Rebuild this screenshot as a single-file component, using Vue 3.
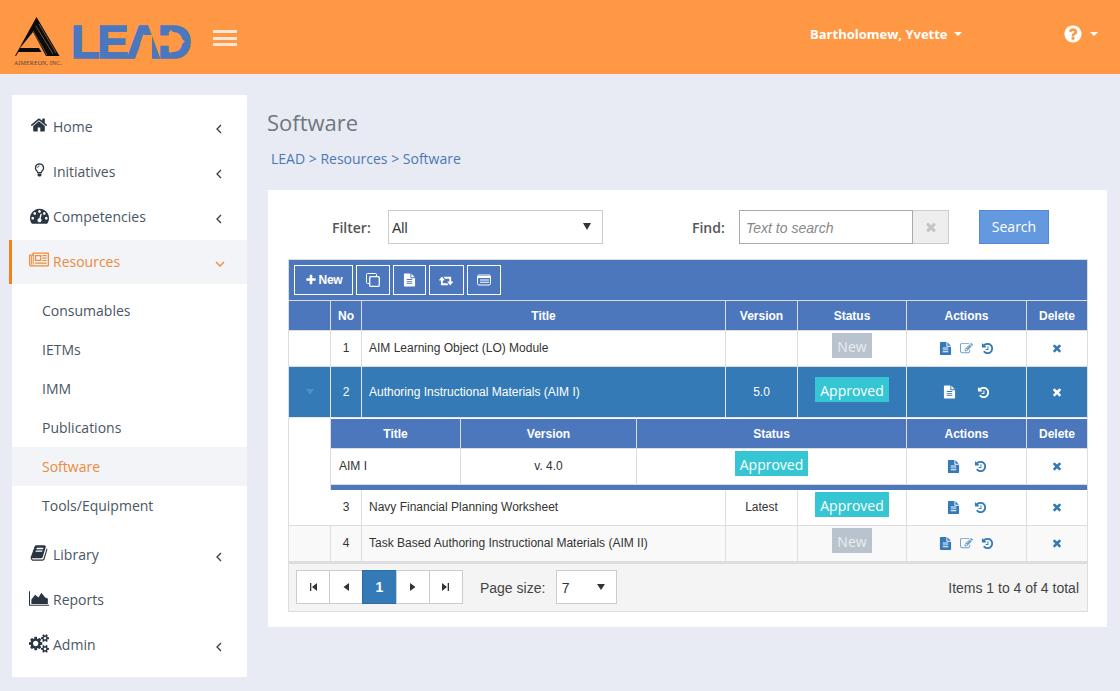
<script setup>
const icons = {
  home: { box: 1792, d: 'M1472 992v480q0 26-19 45t-45 19h-384v-384h-256v384h-384q-26 0-45-19t-19-45v-480q0-1 .5-3t.5-3l575-474 575 474q1 2 1 6zm223-69l-62 74q-8 9-21 11h-3q-13 0-21-7l-692-577-692 577q-12 8-24 7-13-2-21-11l-62-74q-8-10-7-23.500t11-21.500l719-599q32-26 76-26t76 26l244 204v-195q0-14 9-23t23-9h192q14 0 23 9t9 23v408l219 182q10 8 11 21.500t-7 23.500z' },
  gauge: { box: 1792, d: 'M384 1152q0-53-37.500-90.500t-90.500-37.500-90.500 37.500-37.500 90.500 37.500 90.500 90.500 37.500 90.500-37.500 37.500-90.500zm192-448q0-53-37.500-90.500t-90.500-37.500-90.500 37.500-37.500 90.500 37.500 90.500 90.500 37.500 90.500-37.500 37.500-90.500zm428 481l101-382q6-26-7.500-48.500t-38.500-29.500-48 6.500-30 39.500l-101 382q-60 5-107 43.500t-63 98.500q-20 77 20 146t117 89 146-20 89-117q16-60-6-117t-72-91zm660-33q0-53-37.500-90.500t-90.500-37.500-90.500 37.500-37.500 90.500 37.500 90.500 90.500 37.500 90.500-37.500 37.500-90.500zm-640-640q0-53-37.500-90.500t-90.500-37.500-90.500 37.500-37.500 90.500 37.500 90.500 90.500 37.500 90.500-37.500 37.500-90.500zm448 192q0-53-37.500-90.500t-90.500-37.500-90.500 37.500-37.500 90.500 37.500 90.500 90.500 37.500 90.500-37.500 37.500-90.500zm320 448q0 261-141 483-19 29-54 29h-1402q-35 0-54-29-141-221-141-483 0-182 71-348t191-286 286-191 348-71 348 71 286 191 191 286 71 348z' },
  book: { box: 1792, d: 'M1703 478q40 57 18 129l-275 906q-19 64-76.500 107.500t-122.500 43.500h-923q-77 0-148.500-53.500t-99.500-131.500q-24-67-2-127 0-4 3-27t4-37q1-8-3-21.500t-3-19.500q2-11 8-21t16.500-23.500 16.500-23.500q23-38 45-91.500t30-91.500q3-10 .5-30t-.5-28q3-11 17-28t17-23q21-36 42-92t25-90q1-9-2.500-32t.5-28q4-13 22-30.500t22-22.500q19-26 42.500-84.500t27.500-96.500q1-8-3-25.500t-2-26.500q2-8 9-18t18-23 17-21q8-12 16.500-30.500t15-35 16-36 19.500-32 26.500-23.500 36-11.500 47.500 5.500l-1 3q38-9 51-9h761q74 0 114 56t18 130l-274 906q-36 119-71.500 153.500t-128.500 34.500h-869q-27 0-38 15-11 16-1 43 24 70 144 70h923q29 0 56-15.500t35-41.500l300-987q7-22 5-57 38 15 59 43zm-1064 2q-4 13 2 22.500t20 9.500h608q13 0 25.500-9.500t16.500-22.500l21-64q4-13-2-22.500t-20-9.500h-608q-13 0-25.500 9.500t-16.500 22.500zm-83 256q-4 13 2 22.500t20 9.500h608q13 0 25.500-9.500t16.500-22.500l21-64q4-13-2-22.500t-20-9.500h-608q-13 0-25.500 9.500t-16.500 22.500z' },
  cogs: { box: 1920, d: 'M896 896q0-106-75-181t-181-75-181 75-75 181 75 181 181 75 181-75 75-181zm768 512q0-52-38-90t-90-38-90 38-38 90q0 53 37.500 90.500t90.500 37.500 90.500-37.500 37.500-90.500zm0-1024q0-52-38-90t-90-38-90 38-38 90q0 53 37.500 90.500t90.500 37.500 90.500-37.500 37.500-90.500zm-384 421v185q0 10-7 19.500t-16 10.500l-155 24q-11 35-32 76 34 48 90 115 7 11 7 20 0 12-7 19-23 30-82.500 89.500t-78.500 59.500q-11 0-21-7l-115-90q-37 19-77 31-11 108-23 155-7 24-30 24h-186q-11 0-20-7.500t-10-17.500l-23-153q-34-10-75-31l-118 89q-7 7-20 7-11 0-21-8-144-133-144-160 0-9 7-19 10-14 41-53t47-61q-23-44-35-82l-152-24q-10-1-17-9.500t-7-19.500v-185q0-10 7-19.500t16-10.500l155-24q11-35 32-76-34-48-90-115-7-11-7-20 0-12 7-20 22-30 82-89t79-59q11 0 21 7l115 90q34-18 77-32 11-108 23-154 7-24 30-24h186q11 0 20 7.500t10 17.500l23 153q34 10 75 31l118-89q8-7 20-7 11 0 21 8 144 133 144 160 0 8-7 19-12 16-42 54t-45 60q23 48 34 82l152 23q10 2 17 10.500t7 19.500zm640 533v140q0 16-149 31-12 27-30 52 51 113 51 138 0 4-4 7-122 71-124 71-8 0-46-47t-52-68q-20 2-30 2t-30-2q-14 21-52 68t-46 47q-2 0-124-71-4-3-4-7 0-25 51-138-18-25-30-52-149-15-149-31v-140q0-16 149-31 13-29 30-52-51-113-51-138 0-4 4-7 4-2 35-20t59-34 30-16q8 0 46 46.500t52 67.500q20-2 30-2t30 2q51-71 92-112l6-2q4 0 124 70 4 3 4 7 0 25-51 138 17 23 30 52 149 15 149 31zm0-1024v140q0 16-149 31-12 27-30 52 51 113 51 138 0 4-4 7-122 71-124 71-8 0-46-47t-52-68q-20 2-30 2t-30-2q-14 21-52 68t-46 47q-2 0-124-71-4-3-4-7 0-25 51-138-18-25-30-52-149-15-149-31v-140q0-16 149-31 13-29 30-52-51-113-51-138 0-4 4-7 4-2 35-20t59-34 30-16q8 0 46 46.500t52 67.500q20-2 30-2t30 2q51-71 92-112l6-2q4 0 124 70 4 3 4 7 0 25-51 138 17 23 30 52 149 15 149 31z' },
  file: { box: 1792, d: 'M1596 476q14 14 28 36h-472v-472q22 14 36 28zm-476 164h544v1056q0 40-28 68t-68 28h-1344q-40 0-68-28t-28-68v-1600q0-40 28-68t68-28h800v544q0 40 28 68t68 28zm160 736v-64q0-14-9-23t-23-9h-704q-14 0-23 9t-9 23v64q0 14 9 23t23 9h704q14 0 23-9t9-23zm0-256v-64q0-14-9-23t-23-9h-704q-14 0-23 9t-9 23v64q0 14 9 23t23 9h704q14 0 23-9t9-23zm0-256v-64q0-14-9-23t-23-9h-704q-14 0-23 9t-9 23v64q0 14 9 23t23 9h704q14 0 23-9t9-23z' },
  history: { box: 1792, d: 'M1664 896q0 156-61 298t-164 245-245 164-298 61q-172 0-327-72.500t-264-204.500q-7-10-6.500-22.500t8.500-20.500l137-138q10-9 25-9 16 2 23 12 73 95 179 147t225 52q104 0 198.500-40.500t163.500-109.500 109.500-163.500 40.500-198.500-40.500-198.500-109.500-163.500-163.500-109.500-198.500-40.500q-98 0-188 35.500t-160 101.500l137 138q31 30 14 69-17 40-59 40h-448q-26 0-45-19t-19-45v-448q0-42 40-59 39-17 69 14l130 129q107-101 244.500-156.500t284.500-55.500q156 0 298 61t245 164 164 245 61 298zm-640-288v448q0 14-9 23t-23 9h-320q-14 0-23-9t-9-23v-64q0-14 9-23t23-9h224v-352q0-14 9-23t23-9h64q14 0 23 9t9 23z' },
  edit: { box: 1792, d: 'M888 1184l116-116-152-152-116 116v56h96v96h56zm440-720q-16-16-33 1l-350 350q-17 17-1 33t33-1l350-350q17-17 1-33zm80 594v190q0 119-84.500 203.500t-203.500 84.500h-832q-119 0-203.500-84.500t-84.500-203.500v-832q0-119 84.500-203.500t203.500-84.500h832q63 0 117 25 15 7 18 23 3 17-9 29l-49 49q-14 14-32 8-23-6-45-6h-832q-66 0-113 47t-47 113v832q0 66 47 113t113 47h832q66 0 113-47t47-113v-126q0-13 9-22l64-64q15-15 35-7t20 29zm-96-738l288 288-672 672h-288v-288zm444 132l-92 92-288-288 92-92q28-28 68-28t68 28l152 152q28 28 28 68t-28 68z' },
  times: { box: 1792, d: 'M1490 1322q0 40-28 68l-136 136q-28 28-68 28t-68-28l-294-294-294 294q-28 28-68 28t-68-28l-136-136q-28-28-28-68t28-68l294-294-294-294q-28-28-28-68t28-68l136-136q28-28 68-28t68 28l294 294 294-294q28-28 68-28t68 28l136 136q28 28 28 68t-28 68l-294 294 294 294q28 28 28 68z' },
  plus: { box: 1792, d: 'M1600 736v192q0 40-28 68t-68 28h-416v416q0 40-28 68t-68 28h-192q-40 0-68-28t-28-68v-416h-416q-40 0-68-28t-28-68v-192q0-40 28-68t68-28h416v-416q0-40 28-68t68-28h192q40 0 68 28t28 68v416h416q40 0 68 28t28 68z' },
  retweet: { box: 1920, d: 'M1216 1504q0 13-9.500 22.500t-22.500 9.500h-960q-8 0-13.500-2t-9-7-5.500-8-3-11.500-1-11.500v-600h-192q-26 0-45-19t-19-45q0-24 15-41l320-384q19-22 49-22t49 22l320 384q15 17 15 41 0 26-19 45t-45 19h-192v384h576q16 0 25 11l160 192q7 10 7 21zm640-416q0 24-15 41l-320 384q-20 23-49 23t-49-23l-320-384q-15-17-15-41 0-26 19-45t45-19h192v-384h-576q-16 0-25-12l-160-192q-7-9-7-20 0-13 9.500-22.500t22.500-9.500h960q8 0 13.500 2t9 7 5.500 8 3 11.500 1 11.500v600h192q26 0 45 19t19 45z' },
  help: { box: 1792, d: 'M1024 1376v-192q0-14-9-23t-23-9h-192q-14 0-23 9t-9 23v192q0 14 9 23t23 9h192q14 0 23-9t9-23zm256-672q0-88-55.500-163t-138.500-116-170-41q-243 0-371 213-15 24 8 42l132 100q7 6 19 6 16 0 25-12 53-68 86-92 34-24 86-24 48 0 85.500 26t37.500 59q0 38-20 61t-68 45q-63 28-115.500 86.500t-52.500 125.500v36q0 14 9 23t23 9h192q14 0 23-9t9-23q0-19 21.500-49.500t54.500-49.500q32-18 49-28.500t46-35 44.500-48 28-60.500 12.500-81zm384 192q0 209-103 385.500t-279.500 279.500-385.500 103-385.500-103-279.500-279.500-103-385.500 103-385.500 279.500-279.500 385.500-103 385.500 103 279.500 279.500 103 385.500z' },
}

const menuTop = [
  { label: 'Home', icon: 'home', chevron: true },
  { label: 'Initiatives', icon: 'bulb', chevron: true },
  { label: 'Competencies', icon: 'gauge', chevron: true },
]
const menuBottom = [
  { label: 'Library', icon: 'book', chevron: true },
  { label: 'Reports', icon: 'area', chevron: false },
  { label: 'Admin', icon: 'cogs', chevron: true },
]
const subItems = ['Consumables', 'IETMs', 'IMM', 'Publications', 'Software', 'Tools/Equipment']
const pages = ['first', 'prev', '1', 'next', 'last']
</script>

<template>
  <div class="page">
    <header class="topbar">
      <div class="aim-logo">
        <svg width="46" height="40" viewBox="0 0 46 40">
          <path d="M21.500 0 L44.500 39 L31 39 L18 15 L5 31 L24 31 L26.500 35 L3.500 35 L1 39 L0 39 Z" fill="#0c0c0c" />
          <path d="M21 9 L38 37 M24 7 L41 36 M18 14 L32 38" stroke="#8a6238" stroke-width="0.8" />
        </svg>
        <span class="aim-name">AIMEREON, INC.</span>
      </div>
      <div class="lead-logo">
        <span>LEAD</span>
        <i class="lead-gap"></i>
        <i class="lead-arrow"></i>
      </div>
      <div class="burger"><i></i><i></i><i></i></div>
      <div class="user">Bartholomew, Yvette<i class="caret"></i></div>
      <svg class="help" viewBox="0 0 1792 1792"><path :d="icons.help.d" fill="#fff" /></svg>
      <i class="caret help-caret"></i>
    </header>

    <div class="content">
      <aside class="sidebar">
        <a v-for="item in menuTop" :key="item.label" class="menu-item upper">
          <span class="menu-icon">
            <svg v-if="item.icon === 'bulb'" width="11" height="16" viewBox="0 0 13 17">
              <path d="M6.500 1.200a4.800 4.800 0 0 0-3 8.500c.6.600.9 1.300 1 2h4c.1-.7.400-1.400 1-2a4.800 4.800 0 0 0-3-8.500z" fill="none" stroke="#2a3542" stroke-width="1.500" />
              <path d="M4.300 12.500h4.400v2.300l-1 1.500h-2.400l-1-1.500z" fill="#2a3542" />
              <path d="M4.200 6a2.300 2.300 0 0 1 2.300-2.300" fill="none" stroke="#2a3542" />
            </svg>
            <svg v-else :width="item.icon === 'gauge' ? 19 : 18" :height="item.icon === 'gauge' ? 19 : 18" :viewBox="`0 0 ${icons[item.icon].box} ${icons[item.icon].box}`">
              <path :d="icons[item.icon].d" fill="#2a3542" />
            </svg>
          </span>
          <span>{{ item.label }}</span>
          <svg class="chevron" width="6" height="10" viewBox="0 0 6 10"><path d="M5 1 L1 5 L5 9" fill="none" stroke="#2f3d4d" stroke-width="1.300" /></svg>
        </a>

        <a class="menu-item upper is-active">
          <span class="menu-icon">
            <svg width="21" height="15" viewBox="0 0 21 15">
              <path d="M4.500 .7h15.800v12.800a.8.8 0 0 1-.8.8H2.200a1.500 1.500 0 0 1-1.500-1.500V3h3.800z" fill="none" stroke="#ee8a38" stroke-width="1.300" />
              <path d="M2.700 4v9M4.500 1v12" stroke="#ee8a38" />
              <path d="M6.800 3.500h5.500v5h-5.500z" fill="none" stroke="#ee8a38" stroke-width="1.300" />
              <path d="M14 3.500h4.500M14 6h4.500M14 8.500h4.500M6.500 11.300h12" stroke="#ee8a38" stroke-width="1.200" />
            </svg>
          </span>
          <span>Resources</span>
          <svg class="chevron chevron-down" width="10" height="6" viewBox="0 0 10 6"><path d="M1 1 L5 5 L9 1" fill="none" stroke="#ee8a38" stroke-width="1.300" /></svg>
        </a>

        <ul class="submenu">
          <li v-for="sub in subItems" :key="sub" :class="{ 'is-current': sub === 'Software' }">{{ sub }}</li>
        </ul>

        <a v-for="item in menuBottom" :key="item.label" class="menu-item">
          <span class="menu-icon">
            <svg v-if="item.icon === 'area'" width="21" height="15" viewBox="0 0 21 15">
              <path d="M.5 0v14.500H21" fill="none" stroke="#2a3542" stroke-width="1.100" />
              <path d="M2.500 13.200V8.500L6.500 3.500 10 6.500 13 1.500 17 6.500 19.800 7.500V13.200z" fill="#2a3542" />
            </svg>
            <svg v-else :width="item.icon === 'cogs' ? 20 : 18" :height="item.icon === 'cogs' ? 19 : 18" :viewBox="`0 0 ${icons[item.icon].box} 1792`">
              <path :d="icons[item.icon].d" fill="#2a3542" />
            </svg>
          </span>
          <span>{{ item.label }}</span>
          <svg v-if="item.chevron" class="chevron" width="6" height="10" viewBox="0 0 6 10"><path d="M5 1 L1 5 L5 9" fill="none" stroke="#2f3d4d" stroke-width="1.300" /></svg>
        </a>
      </aside>

      <main class="main">
        <h1 class="page-title">Software</h1>
        <div class="crumbs">LEAD &gt; Resources &gt; Software</div>

        <section class="card">
          <div class="filters">
            <label class="filter-label">Filter:</label>
            <div class="select filter-select">All<i class="tri"></i></div>
            <label class="find-label">Find:</label>
            <div class="find-input">Text to search</div>
            <div class="find-clear">
              <svg width="14" height="14" viewBox="0 0 1792 1792"><path :d="icons.times.d" fill="#c4c4c4" /></svg>
            </div>
            <button class="search-btn" type="button">Search</button>
          </div>

          <div class="grid">
            <div class="toolbar">
              <button class="tool-btn tool-new" type="button">
                <svg width="12" height="12" viewBox="0 0 1792 1792"><path :d="icons.plus.d" fill="#fff" /></svg>
                <span>New</span>
              </button>
              <button class="tool-btn w34" type="button">
                <svg width="14" height="14" viewBox="0 0 14 14" fill="none" stroke="#fff">
                  <path d="M3.500 10.500H1.500a1 1 0 0 1-1-1v-8a1 1 0 0 1 1-1h8a1 1 0 0 1 1 1v2" stroke-width="1" />
                  <rect x="3.700" y="3.700" width="9.600" height="9.600" rx="1" stroke-width="1.300" />
                </svg>
              </button>
              <button class="tool-btn w33" type="button">
                <svg width="13" height="14" viewBox="0 0 1792 1792"><path :d="icons.file.d" fill="#fff" /></svg>
              </button>
              <button class="tool-btn w35" type="button">
                <svg width="15" height="13" viewBox="0 0 1920 1792"><path :d="icons.retweet.d" fill="#fff" /></svg>
              </button>
              <button class="tool-btn w34" type="button">
                <svg width="14" height="12" viewBox="0 0 14 12">
                  <rect x=".5" y="1" width="13" height="10" rx="1.500" fill="none" stroke="#fff" />
                  <path d="M1 2h12v2H1zM3 5.500h9v1H3zM3 7.800h9v1H3z" fill="#fff" />
                </svg>
              </button>
            </div>

            <table class="data">
              <colgroup>
                <col style="width: 42px" /><col style="width: 31px" /><col style="width: 364px" />
                <col style="width: 72px" /><col style="width: 109px" /><col style="width: 120px" /><col style="width: 60px" />
              </colgroup>
              <thead>
                <tr><th></th><th>No</th><th>Title</th><th>Version</th><th>Status</th><th>Actions</th><th class="last">Delete</th></tr>
              </thead>
              <tbody>
                <tr class="row">
                  <td></td><td class="c">1</td><td class="title">AIM Learning Object (LO) Module</td><td class="c"></td>
                  <td class="c"><span class="badge new">New</span></td>
                  <td class="c">
                    <div class="actions gap10">
                      <svg width="13" height="13" viewBox="0 0 1792 1792"><path :d="icons.file.d" /></svg>
                      <svg class="pale" width="13" height="13" viewBox="0 0 1792 1792"><path :d="icons.edit.d" /></svg>
                      <svg width="13" height="13" viewBox="0 0 1792 1792"><path :d="icons.history.d" /></svg>
                    </div>
                  </td>
                  <td class="c last"><svg class="del" width="12" height="12" viewBox="0 0 1792 1792"><path :d="icons.times.d" /></svg></td>
                </tr>

                <tr class="row selected">
                  <td class="c"><i class="expand"></i></td><td class="c">2</td><td class="title">Authoring Instructional Materials (AIM I)</td><td class="c">5.0</td>
                  <td class="c"><span class="badge ok">Approved</span></td>
                  <td class="c">
                    <div class="actions gap22">
                      <svg width="13" height="14" viewBox="0 0 1792 1792"><path :d="icons.file.d" /></svg>
                      <svg width="13" height="13" viewBox="0 0 1792 1792"><path :d="icons.history.d" /></svg>
                    </div>
                  </td>
                  <td class="c last"><svg class="del" width="12" height="12" viewBox="0 0 1792 1792"><path :d="icons.times.d" /></svg></td>
                </tr>

                <tr>
                  <td rowspan="2" class="spacer"></td>
                  <td colspan="6" class="detail">
                    <table class="data nested">
                      <colgroup>
                        <col style="width: 130px" /><col style="width: 176px" /><col style="width: 270px" /><col style="width: 120px" /><col style="width: 60px" />
                      </colgroup>
                      <thead>
                        <tr><th>Title</th><th>Version</th><th>Status</th><th>Actions</th><th class="last">Delete</th></tr>
                      </thead>
                      <tbody>
                        <tr class="row">
                          <td class="title">AIM I</td><td class="c">v. 4.0</td>
                          <td class="c"><span class="badge ok">Approved</span></td>
                          <td class="c">
                            <div class="actions gap16">
                              <svg width="13" height="13" viewBox="0 0 1792 1792"><path :d="icons.file.d" /></svg>
                              <svg width="13" height="13" viewBox="0 0 1792 1792"><path :d="icons.history.d" /></svg>
                            </div>
                          </td>
                          <td class="c last"><svg class="del" width="12" height="12" viewBox="0 0 1792 1792"><path :d="icons.times.d" /></svg></td>
                        </tr>
                      </tbody>
                    </table>
                  </td>
                </tr>

                <tr class="row">
                  <td class="c">3</td><td class="title">Navy Financial Planning Worksheet</td><td class="c">Latest</td>
                  <td class="c"><span class="badge ok">Approved</span></td>
                  <td class="c">
                    <div class="actions gap16">
                      <svg width="13" height="13" viewBox="0 0 1792 1792"><path :d="icons.file.d" /></svg>
                      <svg width="13" height="13" viewBox="0 0 1792 1792"><path :d="icons.history.d" /></svg>
                    </div>
                  </td>
                  <td class="c last"><svg class="del" width="12" height="12" viewBox="0 0 1792 1792"><path :d="icons.times.d" /></svg></td>
                </tr>

                <tr class="row alt">
                  <td></td><td class="c">4</td><td class="title">Task Based Authoring Instructional Materials (AIM II)</td><td class="c"></td>
                  <td class="c"><span class="badge new">New</span></td>
                  <td class="c">
                    <div class="actions gap10">
                      <svg width="13" height="13" viewBox="0 0 1792 1792"><path :d="icons.file.d" /></svg>
                      <svg class="pale" width="13" height="13" viewBox="0 0 1792 1792"><path :d="icons.edit.d" /></svg>
                      <svg width="13" height="13" viewBox="0 0 1792 1792"><path :d="icons.history.d" /></svg>
                    </div>
                  </td>
                  <td class="c last"><svg class="del" width="12" height="12" viewBox="0 0 1792 1792"><path :d="icons.times.d" /></svg></td>
                </tr>
              </tbody>
            </table>

            <div class="pager">
              <div class="pages">
                <button v-for="p in pages" :key="p" class="page-btn" :class="{ 'is-on': p === '1' }" type="button">
                  <template v-if="p === '1'">1</template>
                  <svg v-else width="9" height="8" viewBox="0 0 9 8">
                    <path v-if="p === 'first'" d="M1 0h1.300v8H1zM8 0v8L3 4z" fill="#333" />
                    <path v-else-if="p === 'prev'" d="M7 0v8L1.500 4z" fill="#333" />
                    <path v-else-if="p === 'next'" d="M2 0v8L7.500 4z" fill="#333" />
                    <path v-else d="M1 0v8l5-4zM6.700 0H8v8H6.700z" fill="#333" />
                  </svg>
                </button>
              </div>
              <span class="size-label">Page size:</span>
              <div class="select size-select">7<i class="tri"></i></div>
              <span class="items">Items 1 to 4 of 4 total</span>
            </div>
          </div>
        </section>
      </main>
    </div>
  </div>
</template>

<style>
html,
body {
  margin: 0;
  background: #e8ebf3;
}
</style>

<style scoped>
.page {
  width: 1120px;
  height: 691px;
  overflow: hidden;
  background: #e8ebf3;
  font-family: 'Open Sans', sans-serif;
  font-size: 14px;
  color: #333;
}

.topbar {
  height: 74px;
  background: #ff9845;
  display: flex;
  align-items: center;
  color: #fff;
}

.aim-logo {
  width: 58px;
  margin-left: 14px;
  display: flex;
  flex-direction: column;
  align-items: center;
  align-self: flex-start;
  padding-top: 17px;
}

.aim-logo svg {
  margin-right: 10px;
}

.aim-name {
  margin-top: 2px;
  margin-right: 10px;
  font-family: 'Liberation Serif', serif;
  font-size: 6px;
  line-height: 8px;
  letter-spacing: 0.1px;
  white-space: nowrap;
  color: #5a4030;
}

.lead-logo {
  position: relative;
  width: 118px;
  height: 36px;
  margin-left: -1px;
  margin-top: 9px;
  line-height: 36px;
  font-family: 'Liberation Sans', sans-serif;
  font-size: 47px;
  font-weight: 700;
  letter-spacing: -2.400px;
  -webkit-text-stroke: 1.500px #4b77be;
  color: #4b77be;
  white-space: nowrap;
}

.lead-gap {
  position: absolute;
  left: 64px;
  top: 11px;
  width: 17px;
  height: 26px;
  background: #ff9845;
  clip-path: polygon(50% 0, 100% 0, 100% 100%, 0 100%);
}

.lead-arrow {
  position: absolute;
  left: 89px;
  top: 6px;
  width: 25px;
  height: 24px;
  background: #ff9845;
  clip-path: polygon(0 25%, 40% 25%, 40% 0, 100% 50%, 40% 100%, 40% 68%, 0 68%);
}

.burger {
  margin-left: 24px;
  margin-top: 2px;
  width: 24px;
  display: flex;
  flex-direction: column;
  gap: 3.500px;
}

.burger i {
  height: 3px;
  background: #ffe6d2;
}

.user {
  margin-left: 573px;
  margin-bottom: 6px;
  font-size: 13px;
  font-weight: 700;
  white-space: nowrap;
  display: flex;
  align-items: center;
}

.caret {
  display: inline-block;
  width: 0;
  height: 0;
  margin-left: 6px;
  border-top: 4px solid #fff;
  border-left: 4px solid transparent;
  border-right: 4px solid transparent;
}

.help {
  width: 20px;
  height: 20px;
  margin-left: 101px;
  margin-bottom: 6px;
}

.help-caret {
  margin-left: 7px;
  margin-bottom: 6px;
}

.content {
  display: flex;
  align-items: flex-start;
}

.sidebar {
  width: 235px;
  margin: 21px 0 0 12px;
  padding: 10px 0;
  background: #fff;
}

.menu-item {
  box-sizing: border-box;
  height: 45px;
  display: flex;
  align-items: center;
  padding: 0 25px 0 17px;
  color: #4a5664;
  font-size: 14px;
}

.upper {
  padding-bottom: 2px;
}

.menu-icon {
  width: 20px;
  margin-right: 4px;
  flex: 0 0 auto;
  display: flex;
  justify-content: center;
  margin-bottom: 3px;
}

.chevron {
  margin-left: auto;
  margin-top: 5px;
}

.chevron-down {
  margin-right: -3px;
}

.is-active {
  height: 44px;
  margin-bottom: 1px;
  margin-left: -3px;
  border-left: 3px solid #ee8417;
  background: #f2f4f8;
  color: #ee8a38;
}

.submenu {
  list-style: none;
  margin: 0;
  padding: 6px 0 7px;
}

.submenu li {
  height: 39px;
  line-height: 39px;
  padding-left: 30px;
  color: #4a5664;
}

.submenu li.is-current {
  background: #f2f4f8;
  color: #ee8a38;
}

.main {
  margin-left: 21px;
  width: 839px;
}

.page-title {
  margin: 33px 0 0 -1px;
  font-size: 22px;
  line-height: 30px;
  font-weight: 400;
  color: #6f777d;
}

.crumbs {
  margin: 12px 0 0 3px;
  line-height: 20px;
  color: #4a78b5;
}

.card {
  margin-top: 21px;
  padding: 20px 20px 15px;
  background: #fff;
}

.filters {
  height: 34px;
  display: flex;
  align-items: center;
  margin-bottom: 15px;
}

.filter-label,
.find-label {
  font-weight: 600;
  color: #555;
}

.filter-label {
  margin-left: 44px;
  width: 56px;
}

.select {
  position: relative;
  box-sizing: border-box;
  height: 34px;
  line-height: 34px;
  background: #fff;
  border: 1px solid #ccc;
  font-family: 'Liberation Sans', sans-serif;
  color: #333;
}

.tri {
  position: absolute;
  top: 12px;
  width: 0;
  height: 0;
  border-top: 7px solid #333;
  border-left: 4px solid transparent;
  border-right: 4px solid transparent;
}

.filter-select {
  width: 215px;
  padding-left: 3px;
}

.filter-select .tri {
  right: 11px;
}

.find-label {
  margin-left: 89px;
  width: 47px;
}

.find-input {
  box-sizing: border-box;
  width: 174px;
  height: 34px;
  line-height: 34px;
  padding-left: 6px;
  border: 1px solid #aaa;
  font-family: 'Liberation Sans', sans-serif;
  font-style: italic;
  color: #888;
}

.find-clear {
  box-sizing: border-box;
  width: 36px;
  height: 34px;
  display: flex;
  align-items: center;
  justify-content: center;
  background: #eee;
  border: 1px solid #ccc;
  border-left: 0;
}

.search-btn {
  width: 70px;
  height: 34px;
  margin-left: 30px;
  padding: 0 0 2px;
  background: #6499e0;
  border: 1px solid #4d8ad9;
  color: #fff;
  font-family: 'Open Sans', sans-serif;
  font-size: 14px;
}

.grid {
  width: 800px;
  box-sizing: border-box;
  border: 1px solid #ddd;
}

.toolbar {
  height: 40px;
  box-sizing: border-box;
  padding: 5px 0 0 5px;
  display: flex;
  gap: 3px;
  background: #4c77bd;
}

.tool-btn {
  height: 30px;
  box-sizing: border-box;
  padding: 0;
  display: flex;
  align-items: center;
  justify-content: center;
  background: transparent;
  border: 1px solid #fff;
  color: #fff;
  font-family: 'Liberation Sans', sans-serif;
  font-size: 12px;
  font-weight: 700;
}

.tool-new {
  width: 59px;
  gap: 2px;
  letter-spacing: -0.300px;
}

.w33 {
  width: 33px;
}

.w34 {
  width: 34px;
}

.w35 {
  width: 35px;
}

.data {
  width: 798px;
  table-layout: fixed;
  border-collapse: separate;
  border-spacing: 0;
  font-family: 'Liberation Sans', sans-serif;
  font-size: 12px;
  color: #333;
}

.data th {
  height: 29px;
  padding: 0;
  background: #4c77bd;
  color: #fff;
  font-weight: 700;
  border-top: 1px solid #ddd;
  border-right: 1px solid #ddd;
  border-bottom: 1px solid #ddd;
  box-sizing: content-box;
}

.data td {
  padding: 0;
  border-bottom: 1px solid #ddd;
  border-right: 1px solid #ddd;
}

.data .last {
  border-right: 0;
}

.data .row td {
  box-sizing: border-box;
  height: 36px;
  padding-bottom: 2px;
}

.alt td {
  background: #f9f9f9;
}

.data .selected td {
  height: 51px;
  padding-bottom: 1px;
  background: #337ab7;
  color: #fff;
  border-color: #e6e6e6;
}

.c {
  text-align: center;
}

.data .row .title {
  padding-left: 7px;
}

.data .nested .row .title {
  padding-left: 8px;
}

.data .spacer {
  border-right: 0;
  border-bottom: 1px solid #ddd;
}

.data .detail {
  border-right: 0;
  border-bottom: 0;
  box-shadow: -1px 0 0 #ddd;
}

.nested {
  width: 756px;
  border-bottom: 5px solid #4c77bd;
}

.nested th {
  border-top: 1px solid #fff;
}

.badge {
  display: inline-block;
  vertical-align: middle;
  height: 25px;
  line-height: 27px;
  padding: 0 5px;
  margin-bottom: 4px;
  font-family: 'Open Sans', sans-serif;
  font-size: 14px;
  color: #fff;
}

.badge.ok {
  background: #36c6d3;
}

.badge.new {
  background: #b9c3ce;
  color: #e9edf1;
}

.actions {
  display: flex;
  justify-content: center;
  align-items: center;
  margin-top: 1px;
  fill: #337ab7;
}

.actions svg {
  flex: 0 0 auto;
}

.pale {
  fill: #6c9ccb;
}

.gap10 {
  gap: 8px;
}

.gap16 {
  gap: 14px;
}

.gap22 {
  gap: 21px;
}

.selected .actions {
  fill: #fff;
}

.del {
  fill: #337ab7;
  vertical-align: middle;
}

.selected .del {
  fill: #fff;
}

.expand {
  display: inline-block;
  width: 0;
  height: 0;
  vertical-align: middle;
  border-top: 6px solid #4a8fcb;
  border-left: 4px solid transparent;
  border-right: 4px solid transparent;
}

.pager {
  height: 47px;
  box-sizing: content-box;
  border-top: 2px solid #ddd;
  padding: 0 8px 0 7px;
  display: flex;
  align-items: center;
  background: #f4f4f4;
  font-family: 'Liberation Sans', sans-serif;
  font-size: 14px;
  color: #444;
}

.pages {
  display: flex;
  margin-bottom: 1px;
}

.page-btn {
  box-sizing: border-box;
  width: 34.200px;
  height: 34px;
  padding: 0;
  margin-right: -1px;
  display: flex;
  align-items: center;
  justify-content: center;
  background: #fff;
  border: 1px solid #ccc;
  font-family: 'Liberation Sans', sans-serif;
  font-size: 14px;
  font-weight: 700;
}

.page-btn.is-on {
  background: #337ab7;
  border-color: #2e6da4;
  color: #fff;
}

.size-label {
  margin-left: 18px;
}

.size-select {
  box-sizing: border-box;
  width: 61px;
  height: 34px;
  margin-left: 10.500px;
  padding-left: 5px;
  margin-bottom: 1px;
}

.size-select .tri {
  right: 11px;
  border-top-width: 6px;
  top: 13px;
}

.items {
  margin-left: auto;
}
</style>
